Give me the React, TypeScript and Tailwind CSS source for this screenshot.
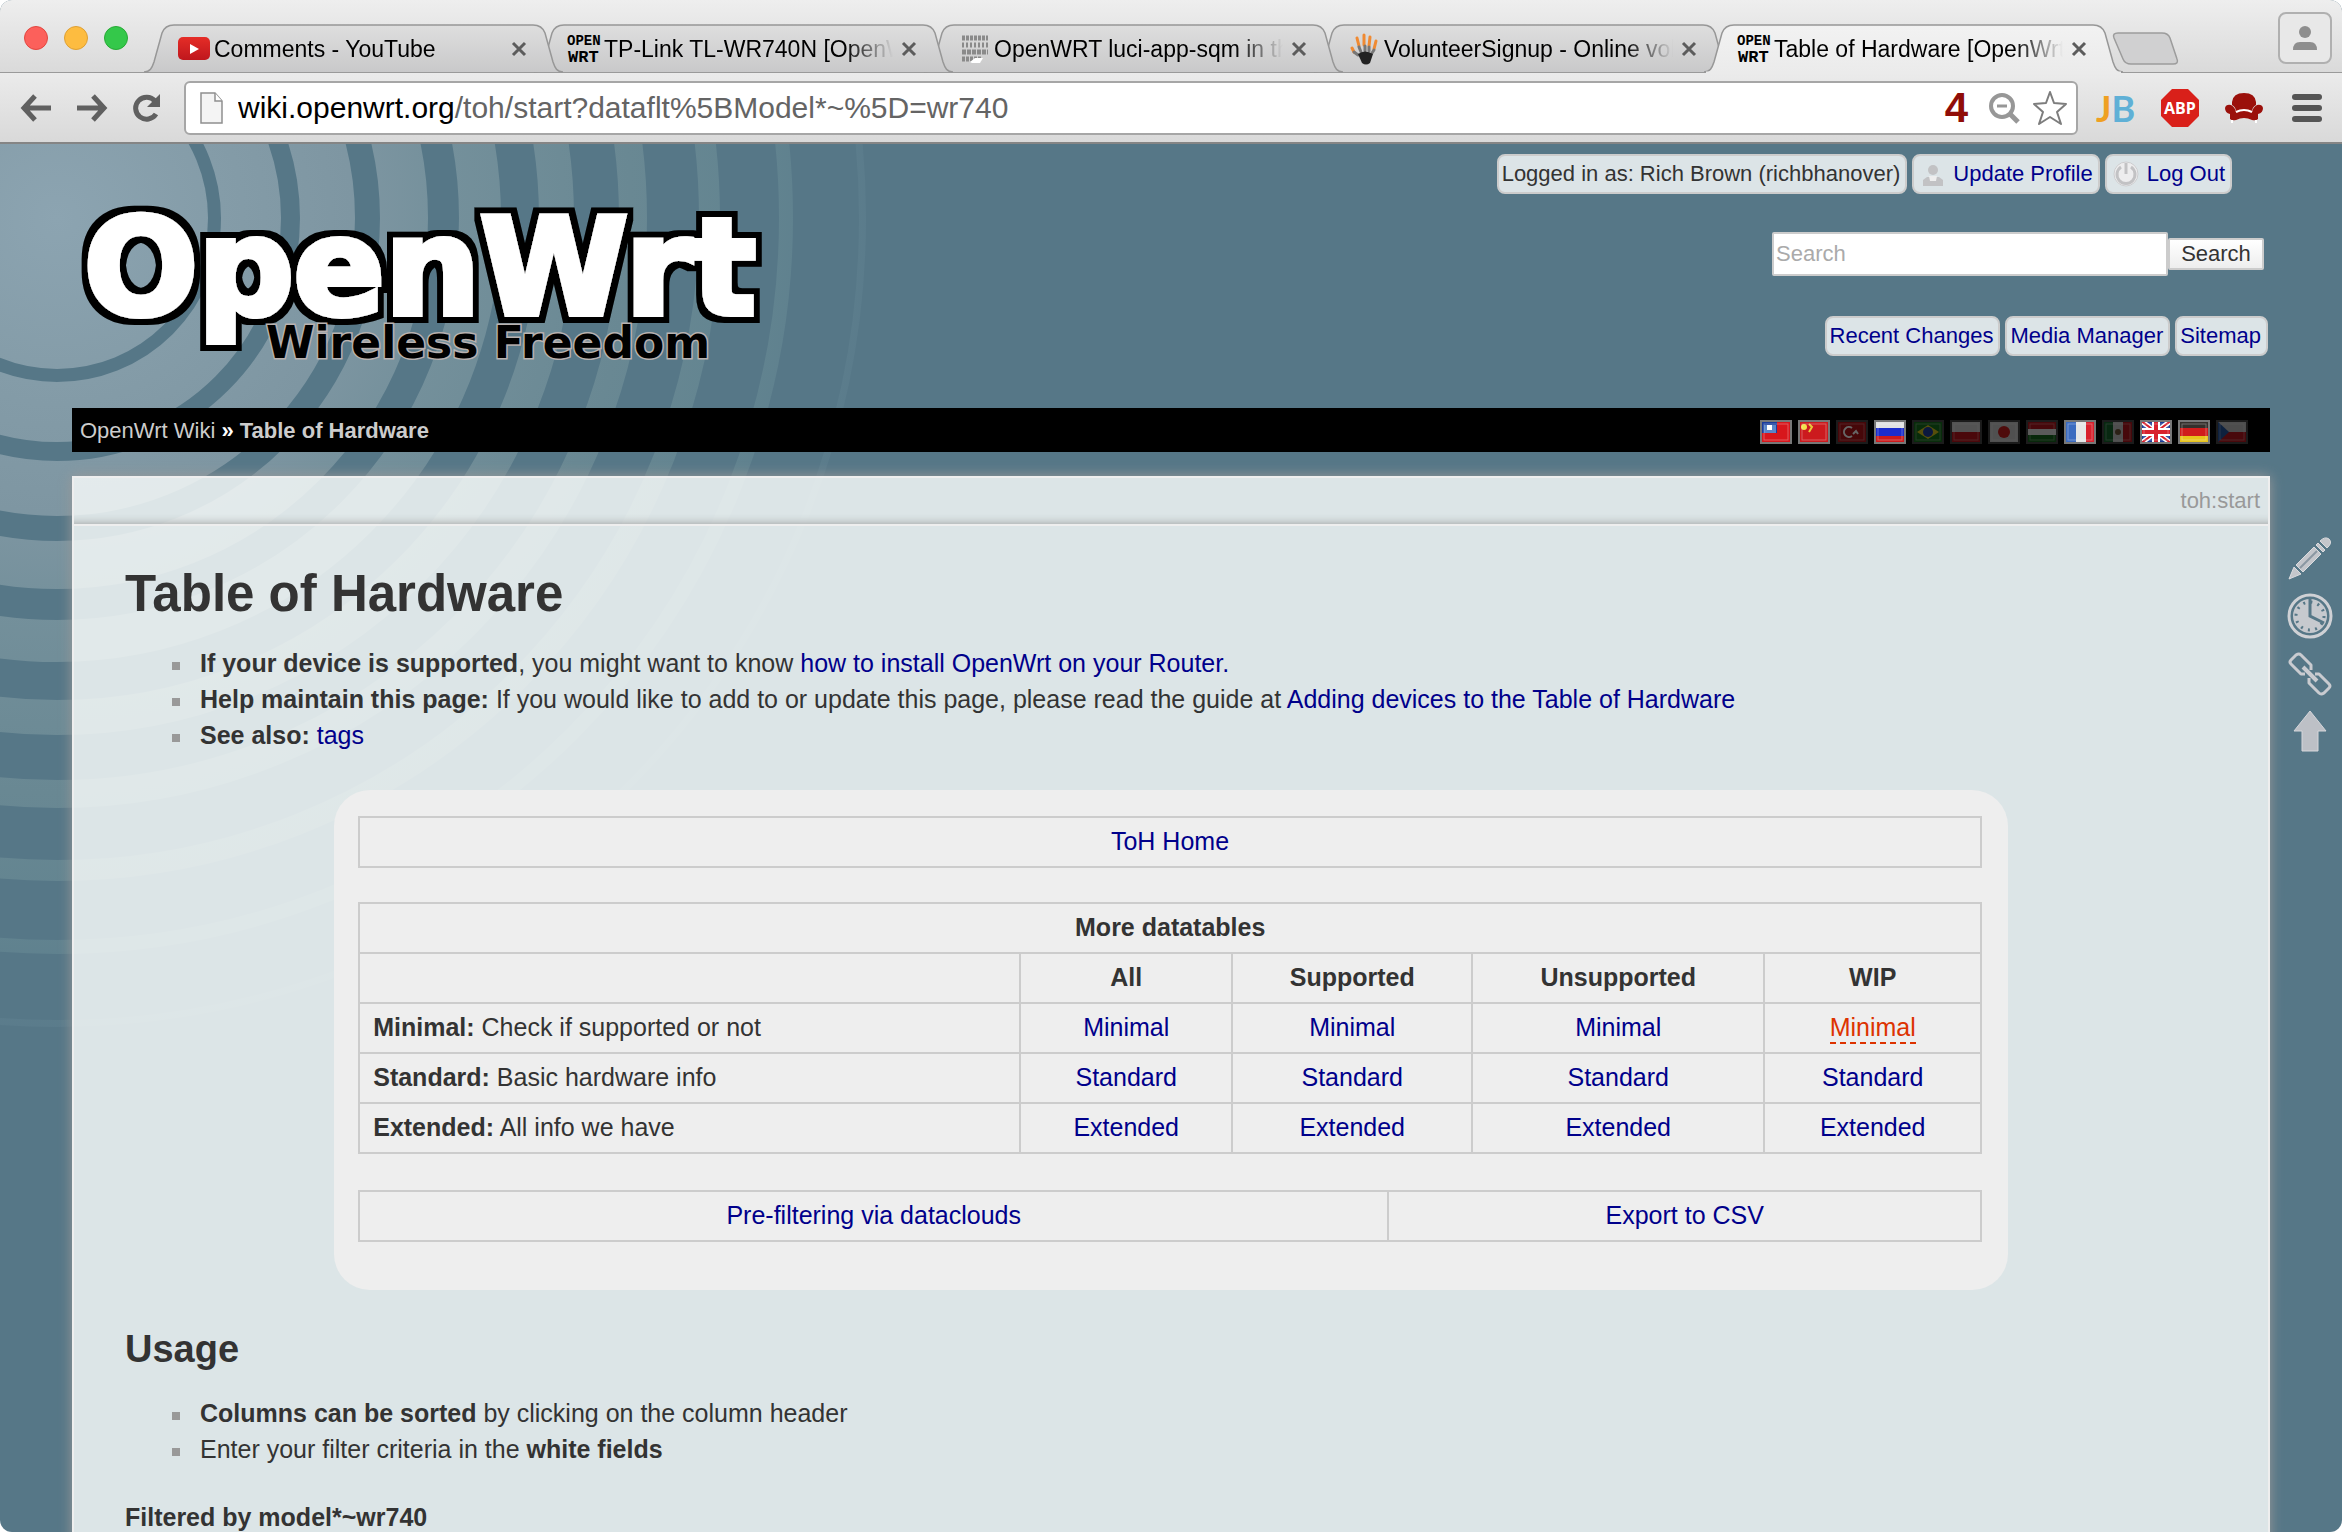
import { ReactNode } from "react";

const tabs = [
  { title: "Comments - YouTube", icon: <YoutubeIcon />, stack: "z-40" },
  { title: "TP-Link TL-WR740N [OpenWrt Wiki]", icon: <OpenWrtIcon />, stack: "z-30" },
  { title: "OpenWRT luci-app-sqm in the trunk", icon: <PixelIcon />, stack: "z-20" },
  { title: "VolunteerSignup - Online volunteer", icon: <HandIcon />, stack: "z-10" },
  { title: "Table of Hardware [OpenWrt Wiki]", icon: <OpenWrtIcon />, stack: "z-50", active: true },
];

// inner edge, outer edge of every ripple
const ripples = [
  [164, 224],
  [243, 298],
  [323, 371],
  [402, 444],
  [482, 517],
  [562, 590],
  [642, 663],
  [722, 736],
  [802, 809],
];

const flags: { name: string; dim?: boolean; art: ReactNode }[] = [
  {
    name: "Traditional Chinese",
    art: (
      <>
        <rect width="32" height="24" fill="#d8161c" />
        <rect width="17" height="13" fill="#1a3c9c" />
        <rect x="4" y="5" width="12" height="8" fill="#5a86c8" />
        <rect x="7" y="5" width="5" height="5" fill="#fff" />
      </>
    ),
  },
  {
    name: "Chinese",
    art: (
      <>
        <rect width="32" height="24" fill="#cc1a1e" />
        <circle cx="6" cy="7" r="3" fill="#f4e04a" />
        <path d="M11 4l3 3-3 5" stroke="#e8c83a" strokeWidth="2" fill="none" />
      </>
    ),
  },
  {
    name: "Turkish",
    dim: true,
    art: (
      <>
        <rect width="32" height="24" fill="#b01218" />
        <path d="M16 8a5 5 0 1 0 0 8" stroke="#fff" strokeWidth="2" fill="none" />
        <path d="M17 14l3-3 2 3" stroke="#fff" strokeWidth="2" fill="none" />
      </>
    ),
  },
  {
    name: "Russian",
    art: (
      <>
        <rect width="32" height="9" fill="#e2e2e2" />
        <rect y="8" width="32" height="8" fill="#1c2ccc" />
        <rect y="16" width="32" height="8" fill="#cc1a1c" />
      </>
    ),
  },
  {
    name: "Portuguese",
    dim: true,
    art: (
      <>
        <rect width="32" height="24" fill="#146e1c" />
        <path d="M5 12l11-7 11 7-11 7z" fill="#d8c41c" />
        <circle cx="16" cy="12" r="5" fill="#1c3c9c" />
      </>
    ),
  },
  {
    name: "Polish",
    dim: true,
    art: (
      <>
        <rect width="32" height="12" fill="#d0d0d0" />
        <rect y="12" width="32" height="12" fill="#b8141c" />
      </>
    ),
  },
  {
    name: "Japanese",
    dim: true,
    art: (
      <>
        <rect width="32" height="24" fill="#c8c8c8" />
        <circle cx="16" cy="12" r="6" fill="#c41c1c" />
      </>
    ),
  },
  {
    name: "Hungarian",
    dim: true,
    art: (
      <>
        <rect width="32" height="9" fill="#b0141c" />
        <rect y="9" width="32" height="6" fill="#e0e0e0" />
        <rect y="15" width="32" height="9" fill="#14641c" />
      </>
    ),
  },
  {
    name: "French",
    art: (
      <>
        <rect width="12" height="24" fill="#3c6cc0" />
        <rect x="12" width="10" height="24" fill="#e6e6e6" />
        <rect x="22" width="10" height="24" fill="#d8202c" />
      </>
    ),
  },
  {
    name: "Spanish",
    dim: true,
    art: (
      <>
        <rect width="11" height="24" fill="#14642c" />
        <rect x="11" width="10" height="24" fill="#c4c4c4" />
        <rect x="21" width="11" height="24" fill="#b0141c" />
        <circle cx="16" cy="12" r="3" fill="#6c5438" />
      </>
    ),
  },
  {
    name: "English",
    art: (
      <>
        <rect width="32" height="24" fill="#1c3c98" />
        <path d="M0 0l32 24M32 0L0 24" stroke="#fff" strokeWidth="5" />
        <path d="M0 0l32 24M32 0L0 24" stroke="#d8202c" strokeWidth="2" />
        <path d="M16 0v24M0 12h32" stroke="#fff" strokeWidth="8" />
        <path d="M16 0v24M0 12h32" stroke="#d8202c" strokeWidth="4" />
      </>
    ),
  },
  {
    name: "German",
    art: (
      <>
        <rect width="32" height="9" fill="#34302c" />
        <rect y="8" width="32" height="8" fill="#d01c1c" />
        <rect y="16" width="32" height="8" fill="#e8c41c" />
      </>
    ),
  },
  {
    name: "Czech",
    dim: true,
    art: (
      <>
        <rect width="32" height="12" fill="#c0c0c0" />
        <rect y="12" width="32" height="12" fill="#b41820" />
        <path d="M0 0l13 12L0 24z" fill="#24549c" />
      </>
    ),
  },
];

const datatables = [
  { name: "Minimal", text: "Check if supported or not" },
  { name: "Standard", text: "Basic hardware info" },
  { name: "Extended", text: "All info we have" },
];

const columns = ["All", "Supported", "Unsupported", "WIP"];

function YoutubeIcon() {
  return (
    <svg viewBox="0 0 32 24" className="h-6 w-8">
      <defs>
        <linearGradient id="yt" x1="0" y1="0" x2="0" y2="1">
          <stop offset="0" stopColor="#e52d27" />
          <stop offset="1" stopColor="#bf171d" />
        </linearGradient>
      </defs>
      <rect width="32" height="23" rx="5" fill="url(#yt)" />
      <path d="M12 7l9 5-9 5z" fill="#fff" />
    </svg>
  );
}

function OpenWrtIcon() {
  return (
    <svg viewBox="0 0 34 32" className="h-8 w-[34px] shrink-0">
      <g fontFamily="Liberation Mono, monospace" fontWeight="700" fill="#000">
        <text x="0" y="12" fontSize="14">OPEN</text>
        <text x="1" y="29" fontSize="17">WRT</text>
      </g>
    </svg>
  );
}

function PixelIcon() {
  return (
    <svg viewBox="0 0 32 32" className="h-8 w-8">
      <g stroke="#8a8a8a" strokeWidth="5" fill="none">
        <path d="M4 5h26" strokeDasharray="3 1" />
        <path d="M4 12h26" strokeDasharray="2 2" />
        <path d="M4 19h26" strokeDasharray="4 1" />
        <path d="M4 26h20" strokeDasharray="3 1" />
      </g>
      <path d="M12 29l5-4h8l-3 5h-8z" fill="#fff" />
    </svg>
  );
}

function HandIcon() {
  return (
    <svg viewBox="0 0 32 32" className="h-8 w-8">
      <g strokeLinecap="round" strokeWidth="3" fill="none">
        <path d="M11 13L9 5M16 12V2M21 13l1-9M26 16l2-8M6 19l-2-4" stroke="#f08a32" />
        <path d="M13 19l-2-5M17 18v-5M21 18v-4M24 20l2-3M10 22l-4-3" stroke="#777" />
      </g>
      <path d="M10 21q7-5 15 0l-3 9q-4 3-8 0z" fill="#222" />
    </svg>
  );
}

function Tab({ title, icon, stack, active }: { title: string; icon: ReactNode; stack: string; active?: boolean }) {
  return (
    <div className={`relative -ml-[29px] flex h-[49px] min-w-0 max-w-[419px] flex-1 items-center pl-[34px] pr-9 ${stack}`}>
      <svg viewBox="0 0 419 49" preserveAspectRatio="none" className="absolute inset-0 h-full w-full">
        <defs>
          <linearGradient id="tab-off" x1="0" y1="0" x2="0" y2="1">
            <stop offset="0" stopColor="#dedede" />
            <stop offset="1" stopColor="#c9c9ca" />
          </linearGradient>
          <linearGradient id="tab-on" x1="0" y1="0" x2="0" y2="1">
            <stop offset="0" stopColor="#f2f2f2" />
            <stop offset="1" stopColor="#ebebeb" />
          </linearGradient>
        </defs>
        <path
          d="M0 48C6 48 8 44 10 38L18 9Q21 1 30 1H389Q398 1 401 9L409 38C411 44 413 48 419 48"
          fill={active ? "url(#tab-on)" : "url(#tab-off)"}
          stroke="#979797"
          strokeWidth="1.500"
        />
        {active && <path d="M2 48.500H417" stroke="#ebebeb" strokeWidth="2" />}
      </svg>
      <span className="relative flex w-8 shrink-0 items-center justify-center">{icon}</span>
      <span className="relative ml-1 flex-1 overflow-hidden whitespace-nowrap text-[23px] leading-8 text-black [mask-image:linear-gradient(to_right,black_calc(100%-48px),transparent)]">
        {title}
      </span>
      <button aria-label={`Close ${title}`} className="relative ml-2 shrink-0">
        <svg viewBox="0 0 16 16" className="h-4 w-4">
          <path d="M2 2l12 12M14 2L2 14" stroke="#5c5c5c" strokeWidth="3" />
        </svg>
      </button>
    </div>
  );
}

function BrowserChrome() {
  return (
    <div className="shrink-0">
      <div className="flex h-[73px] items-end border-b border-[#9a9a9a] bg-linear-to-b from-[#eeeeee] to-[#dadada] pl-6 pr-[10px]">
        <div className="mr-[45px] flex gap-4 self-center pt-1">
          <button aria-label="Close window" className="h-6 w-6 rounded-full border border-[#e2463f] bg-[#fc605b]" />
          <button aria-label="Minimize window" className="h-6 w-6 rounded-full border border-[#dea034] bg-[#fdbc40]" />
          <button aria-label="Zoom window" className="h-6 w-6 rounded-full border border-[#27aa35] bg-[#34c84a]" />
        </div>
        <div className="-mb-px flex min-w-0 flex-1">
          {tabs.map((tab) => (
            <Tab key={tab.title} {...tab} />
          ))}
          <button aria-label="New tab" className="-ml-3 mt-2 h-8 w-[68px] shrink-0">
            <svg viewBox="0 0 68 34" className="h-[34px] w-[68px]">
              <path
                d="M7 1H51Q57 1 59 6L66 27Q68 32 62 32H20Q14 32 12 27L3 6Q1 1 7 1Z"
                fill="#d0d0d1"
                stroke="#9c9c9c"
                strokeWidth="1.500"
              />
            </svg>
          </button>
        </div>
        <button
          aria-label="Profile"
          className="mb-2 flex h-[52px] w-[54px] shrink-0 items-center justify-center rounded-lg border-2 border-[#b0b0b0] bg-[#e8e8e8]"
        >
          <svg viewBox="0 0 26 26" className="h-[26px] w-[26px]" fill="#8e8e8e">
            <ellipse cx="13" cy="7" rx="6" ry="6" />
            <path d="M1 25q0-8 7-8h10q7 0 7 8z" />
          </svg>
        </button>
      </div>

      <div className="flex h-[71px] items-center border-b-2 border-[#858585] bg-linear-to-b from-[#ebebeb] to-[#d9d9d9] pl-5 pr-5">
        <div className="flex w-[164px] shrink-0 items-center gap-6">
          <button aria-label="Back">
            <svg viewBox="0 0 32 28" className="h-7 w-8" fill="none" stroke="#606060" strokeWidth="5">
              <path d="M15 2L4 14l11 12M4 14h27" />
            </svg>
          </button>
          <button aria-label="Forward">
            <svg viewBox="0 0 32 28" className="h-7 w-8" fill="none" stroke="#606060" strokeWidth="5">
              <path d="M17 2l11 12-11 12M28 14H1" />
            </svg>
          </button>
          <button aria-label="Reload">
            <svg viewBox="0 0 30 28" className="h-7 w-[30px]" fill="none" stroke="#606060" strokeWidth="5">
              <path d="M23 7A11 11 0 1 0 24 20" />
              <path d="M28 0v13H15z" fill="#606060" stroke="none" />
            </svg>
          </button>
        </div>
        <div className="flex h-[54px] min-w-0 flex-1 items-center rounded-md border-2 border-[#a6a6a6] bg-white pl-[14px] pr-2">
          <svg viewBox="0 0 24 32" className="h-8 w-6 shrink-0">
            <path d="M1 1h14l7 8v22H1z" fill="#f4f4f4" stroke="#8f8f8f" strokeWidth="1.500" />
            <path d="M15 1v8h7" fill="#fff" stroke="#8f8f8f" strokeWidth="1.500" />
          </svg>
          <a href="#address" className="ml-[14px] flex-1 overflow-hidden whitespace-nowrap text-[30px] leading-10 text-[#646464]">
            <span className="text-black">wiki.openwrt.org</span>/toh/start?dataflt%5BModel*~%5D=wr740
          </a>
          <span className="mr-5 font-['Liberation_Sans'] text-[42px] leading-[50px] font-bold text-[#900d08]">4</span>
          <svg viewBox="0 0 32 32" className="mr-3 h-8 w-8 shrink-0" fill="none" stroke="#979797">
            <circle cx="14" cy="14" r="11" strokeWidth="4" />
            <path d="M9 14h10" strokeWidth="3" />
            <path d="M22 22l8 8" strokeWidth="5" />
          </svg>
          <button aria-label="Bookmark this page">
            <svg viewBox="0 0 36 36" className="h-9 w-9" fill="#fff" stroke="#7d7d7d" strokeWidth="2" strokeLinejoin="round">
              <path d="M18 2l4 11 12 1-9 8 4 12-11-7-11 7 4-12-9-8 12-1z" />
            </svg>
          </button>
        </div>
        <div className="ml-[18px] flex shrink-0 items-center gap-6">
          <svg viewBox="0 0 40 40" className="h-10 w-10">
            <text x="0" y="34" fontFamily="Lato, sans-serif" fontWeight="700" fontSize="36" fill="#efa022">
              J<tspan fill="#5fb0d6">B</tspan>
            </text>
          </svg>
          <svg viewBox="0 0 40 40" className="h-10 w-10">
            <path d="M12 1h16l11 11v16L28 39H12L1 28V12z" fill="#d9201a" />
            <text x="20" y="26" textAnchor="middle" fontFamily="Open Sans, sans-serif" fontWeight="700" fontSize="16" fill="#fff">
              ABP
            </text>
          </svg>
          <svg viewBox="0 0 40 32" className="h-8 w-10">
            <path d="M8 13V10Q9 1 20 1t12 9v3q-4 2-4 7H12q0-5-4-7z" fill="#9b100b" />
            <path d="M1 16q1-4 6-3 4 2 5 7 8-4 16 0 1-5 5-7 5-1 6 3 0 5-5 6v5q-2 2-6 1-8-4-16 0-4 1-6-1v-5q-5-1-5-6z" fill="#9b100b" />
            <path d="M12 20q8-4 16 0M8 28v3M32 28v3" stroke="#fff" strokeWidth="2" fill="none" />
          </svg>
          <button aria-label="Menu" className="ml-1 flex w-[30px] flex-col gap-[5px]">
            <span className="h-[6px] rounded-sm bg-[#555]" />
            <span className="h-[6px] rounded-sm bg-[#555]" />
            <span className="h-[6px] rounded-sm bg-[#555]" />
          </button>
        </div>
      </div>
    </div>
  );
}

function Ripples() {
  return (
    <svg viewBox="0 0 900 1000" className="pointer-events-none absolute left-0 top-0 h-[1000px] w-[900px]">
      <defs>
        <radialGradient id="ripple" gradientUnits="userSpaceOnUse" cx="57" cy="74" r="820">
          <stop offset="0" stopColor="#8ca4b1" />
          <stop offset="0.200" stopColor="#849ca8" />
          <stop offset="0.360" stopColor="#7e96a2" />
          <stop offset="0.480" stopColor="#74909b" />
          <stop offset="0.700" stopColor="#698893" />
          <stop offset="0.860" stopColor="#628490" />
          <stop offset="1" stopColor="#5a7b8b" />
        </radialGradient>
      </defs>
      <circle cx="57" cy="74" r="151" fill="url(#ripple)" />
      {ripples.map(([inner, outer]) => (
        <circle
          key={inner}
          cx="57"
          cy="74"
          r={(inner + outer) / 2}
          fill="none"
          stroke="url(#ripple)"
          strokeWidth={outer - inner}
        />
      ))}
    </svg>
  );
}

function Logo() {
  return (
    <a href="#home" aria-label="OpenWrt Wireless Freedom" className="mt-[50px]">
      <svg viewBox="0 0 700 180" className="h-[180px] w-[700px]">
        <defs>
          {/* black rim around the lettering */}
          <filter id="rim" x="-5%" y="-10%" width="110%" height="120%">
            <feMorphology in="SourceAlpha" operator="dilate" radius="6" result="fat" />
            <feFlood floodColor="#000" />
            <feComposite in2="fat" operator="in" />
            <feMerge>
              <feMergeNode />
              <feMergeNode in="SourceGraphic" />
            </feMerge>
          </filter>
        </defs>
        <g fontFamily="DejaVu Sans, sans-serif" fontWeight="700">
          <text x="12" y="120" fontSize="134" fill="#fff" stroke="#fff" strokeWidth="6" filter="url(#rim)">
            OpenWrt
          </text>
          <text x="194" y="164" fontSize="44" fill="#000" stroke="#b9b2b0" strokeWidth="3" paintOrder="stroke">
            Wireless Freedom
          </text>
        </g>
      </svg>
    </a>
  );
}

function Pill({ children }: { children: ReactNode }) {
  return (
    <div className="flex h-10 items-center whitespace-nowrap rounded-lg border-2 border-[#ccc] bg-[#dce4e7] pl-[3px] pr-[5px]">
      {children}
    </div>
  );
}

function PageLink({ children }: { children: ReactNode }) {
  return (
    <a href="#page" className="text-[#00008b]">
      {children}
    </a>
  );
}

function SiteHeader() {
  return (
    <header className="flex h-[264px] justify-between pl-[72px] pr-[74px] text-[22px] leading-[26px]">
      <Logo />
      <div className="flex flex-col items-end pt-[10px]">
        <div className="flex gap-[5px] pr-9">
          <Pill>Logged in as: Rich Brown (richbhanover)</Pill>
          <Pill>
            <svg viewBox="0 0 24 26" className="ml-1 mr-2 h-[26px] w-6" fill="#c2c2c4">
              <circle cx="12" cy="9" r="5" />
              <path d="M2 25v-6l4-3h12l4 3v6z" />
              <path d="M8 15h8l-1 5H9z" fill="#eee" />
            </svg>
            <PageLink>Update Profile</PageLink>
          </Pill>
          <Pill>
            <svg viewBox="0 0 26 26" className="ml-[3px] mr-2 h-[26px] w-[26px]" fill="none">
              <circle cx="13" cy="13" r="12" fill="#ededee" stroke="#cdcdcf" strokeWidth="1" />
              <path d="M8 6a9 9 0 1 0 10 0" stroke="#c2c2c4" strokeWidth="3" />
              <path d="M13 2v11" stroke="#c2c2c4" strokeWidth="3" />
            </svg>
            <PageLink>Log Out</PageLink>
          </Pill>
        </div>
        <form className="mt-[38px] flex items-center pr-1" onSubmit={(e) => e.preventDefault()}>
          <input
            type="text"
            aria-label="Search"
            placeholder="Search"
            className="h-11 w-[396px] rounded-xs border-2 border-[#ccc] bg-white px-[2px] placeholder:text-[#aaa]"
          />
          <button className="h-8 w-24 rounded-xs border-2 border-[#ccc] bg-linear-to-b from-white to-[#eee] leading-7">
            Search
          </button>
        </form>
        <div className="mt-10 flex gap-[5px]">
          <Pill>
            <PageLink>Recent Changes</PageLink>
          </Pill>
          <Pill>
            <PageLink>Media Manager</PageLink>
          </Pill>
          <Pill>
            <PageLink>Sitemap</PageLink>
          </Pill>
        </div>
      </div>
    </header>
  );
}

function Breadcrumbs() {
  return (
    <nav className="mx-[72px] flex h-11 items-center justify-between bg-black pl-2 pr-[22px] text-[22px] text-[#ccc]">
      <p>
        <a href="#wiki">OpenWrt Wiki</a> <b className="text-white">»</b>{" "}
        <a href="#toh" className="font-bold">
          Table of Hardware
        </a>
      </p>
      <div className="flex gap-[6px] pt-1">
        {flags.map((flag) => (
          <a key={flag.name} href="#lang" aria-label={flag.name} className={flag.dim ? "opacity-40" : ""}>
            <svg viewBox="0 0 32 24" className="h-6 w-8">
              {flag.art}
              <rect x="4" y="4" width="24" height="16" fill="none" stroke="#fff" strokeOpacity="0.300" />
              <rect x="1" y="1" width="30" height="22" fill="none" stroke={flag.dim ? "#444" : "#777"} strokeWidth="2" />
            </svg>
          </a>
        ))}
      </div>
    </nav>
  );
}

function Bullets({ children }: { children: ReactNode }) {
  return <ul className="pl-[47px] leading-9">{children}</ul>;
}

function Bullet({ children }: { children: ReactNode }) {
  return (
    <li className="flex items-center">
      <span className="mr-5 mt-[6px] h-2 w-2 shrink-0 bg-[#999]" />
      <p>{children}</p>
    </li>
  );
}

function HardwareTables() {
  return (
    <div className="mx-auto mt-[37px] w-[80%] rounded-[36px] bg-[#eee] pb-12 pl-6 pr-[26px] pt-[26px]">
      <table className="w-full border-collapse text-center">
        <tbody>
          <tr>
            <td className="h-[50px] border-2 border-[#ccc]">
              <PageLink>ToH Home</PageLink>
            </td>
          </tr>
        </tbody>
      </table>

      <table className="mt-[34px] w-full table-fixed border-collapse text-center">
        <colgroup>
          <col className="w-[661px]" />
          <col className="w-[212px]" />
          <col className="w-[240px]" />
          <col className="w-[292px]" />
          <col className="w-[217px]" />
        </colgroup>
        <thead>
          <tr>
            <th colSpan={5} className="h-[50px] border-2 border-[#ccc]">
              More datatables
            </th>
          </tr>
          <tr>
            <th className="h-[50px] border-2 border-[#ccc]" />
            {columns.map((column) => (
              <th key={column} className="border-2 border-[#ccc]">
                {column}
              </th>
            ))}
          </tr>
        </thead>
        <tbody>
          {datatables.map((row) => (
            <tr key={row.name}>
              <td className="h-[50px] border-2 border-[#ccc] pl-[13px] text-left">
                <b>{row.name}:</b> {row.text}
              </td>
              {columns.map((column) => (
                <td key={column} className="border-2 border-[#ccc]">
                  {row.name === "Minimal" && column === "WIP" ? (
                    <a href="#missing" className="border-b-2 border-dashed border-[#dd3300] pb-px text-[#dd3300]">
                      {row.name}
                    </a>
                  ) : (
                    <PageLink>{row.name}</PageLink>
                  )}
                </td>
              ))}
            </tr>
          ))}
        </tbody>
      </table>

      <table className="mt-9 w-full table-fixed border-collapse text-center">
        <colgroup>
          <col className="w-[1029px]" />
          <col className="w-[593px]" />
        </colgroup>
        <tbody>
          <tr>
            <td className="h-[50px] border-2 border-[#ccc]">
              <PageLink>Pre-filtering via dataclouds</PageLink>
            </td>
            <td className="border-2 border-[#ccc]">
              <PageLink>Export to CSV</PageLink>
            </td>
          </tr>
        </tbody>
      </table>
    </div>
  );
}

function PageTools() {
  return (
    <aside className="flex w-[72px] shrink-0 flex-col items-center gap-[13px] pl-2 pt-[60px]">
      <a href="#edit" aria-label="Edit this page">
        <svg viewBox="0 0 44 44" className="h-11 w-11" fill="#c4c6cb" stroke="#dadbde">
          <path d="M1 43l5-12 7 7z" />
          <path d="M8 29L26 11l7 7-18 18z" />
          <path d="M12 32L29 15" stroke="#8a97a2" strokeWidth="2" />
          <path d="M28 9l2-2 7 7-2 2z" />
          <path d="M32 5q5-5 9-2 4 4-2 9z" />
        </svg>
      </a>
      <a href="#history" aria-label="Old revisions">
        <svg viewBox="0 0 46 46" className="h-[46px] w-[46px]">
          <circle cx="23" cy="23" r="21" fill="#567787" stroke="#cfd1d5" strokeWidth="3" />
          <circle cx="23" cy="23" r="17" fill="#c6c9ce" />
          <circle cx="23" cy="23" r="14" fill="none" stroke="#567787" strokeWidth="3" strokeDasharray="2 5.330" />
          <path d="M23 6v17l14 7" fill="none" stroke="#567787" strokeWidth="3" />
        </svg>
      </a>
      <a href="#backlinks" aria-label="Backlinks">
        <svg viewBox="0 0 44 44" className="h-11 w-11" fill="none" stroke="#c9cbd0" strokeWidth="3" strokeLinejoin="round">
          <path d="M17 22h-4L3 12q-2-2 0-4l5-5q3-2 5 0l10 10v5" />
          <path d="M27 22h4l10 10q2 2 0 4l-5 5q-3 2-5 0L21 31v-5" />
          <path d="M15 15l14 14" strokeWidth="4" />
        </svg>
      </a>
      <a href="#top" aria-label="Back to top">
        <svg viewBox="0 0 36 44" className="h-11 w-9">
          <path d="M18 2l16 20h-8v20H10V22H2z" fill="#bdc0c6" stroke="#d6d7db" strokeWidth="1" />
        </svg>
      </a>
    </aside>
  );
}

export default function App() {
  return (
    <div className="flex h-screen flex-col overflow-hidden rounded-xl bg-[#567787] font-['Liberation_Sans',Arial,sans-serif] text-[#333]">
      <BrowserChrome />
      <div className="relative flex-1 overflow-hidden">
        <Ripples />
        <div className="relative">
          <SiteHeader />
          <Breadcrumbs />
          <div className="mt-6 flex pl-[72px]">
            <main className="min-w-0 flex-1 text-[25px] shadow-[0_0_12px_#999]">
              <div className="flex h-12 items-center justify-end border-2 border-b-0 border-[#eee] bg-[#f8fbfa]/83 pb-[2px] pr-2 text-[22px] text-[#999] shadow-[inset_0_-10px_10px_-10px_#999]">
                toh:start
              </div>
              <article className="border-2 border-[#eee] bg-[#f8fbfa]/83 px-[51px] pb-20 pt-[38px]">
                <h1 className="text-[51px] leading-[60px] font-bold">Table of Hardware</h1>
                <div className="pt-[21px]">
                  <Bullets>
                    <Bullet>
                      <b>If your device is supported</b>, you might want to know{" "}
                      <PageLink>how to install OpenWrt on your Router.</PageLink>
                    </Bullet>
                    <Bullet>
                      <b>Help maintain this page:</b> If you would like to add to or update this page, please read the
                      guide at <PageLink>Adding devices to the Table of Hardware</PageLink>
                    </Bullet>
                    <Bullet>
                      <b>See also:</b> <PageLink>tags</PageLink>
                    </Bullet>
                  </Bullets>
                </div>
                <HardwareTables />
                <h2 className="mt-9 text-[38px] leading-[46px] font-bold">Usage</h2>
                <div className="pt-[23px]">
                  <Bullets>
                    <Bullet>
                      <b>Columns can be sorted</b> by clicking on the column header
                    </Bullet>
                    <Bullet>
                      Enter your filter criteria in the <b>white fields</b>
                    </Bullet>
                  </Bullets>
                </div>
                <p className="mt-8 leading-9 font-bold">Filtered by model*~wr740</p>
              </article>
            </main>
            <PageTools />
          </div>
        </div>
      </div>
    </div>
  );
}
